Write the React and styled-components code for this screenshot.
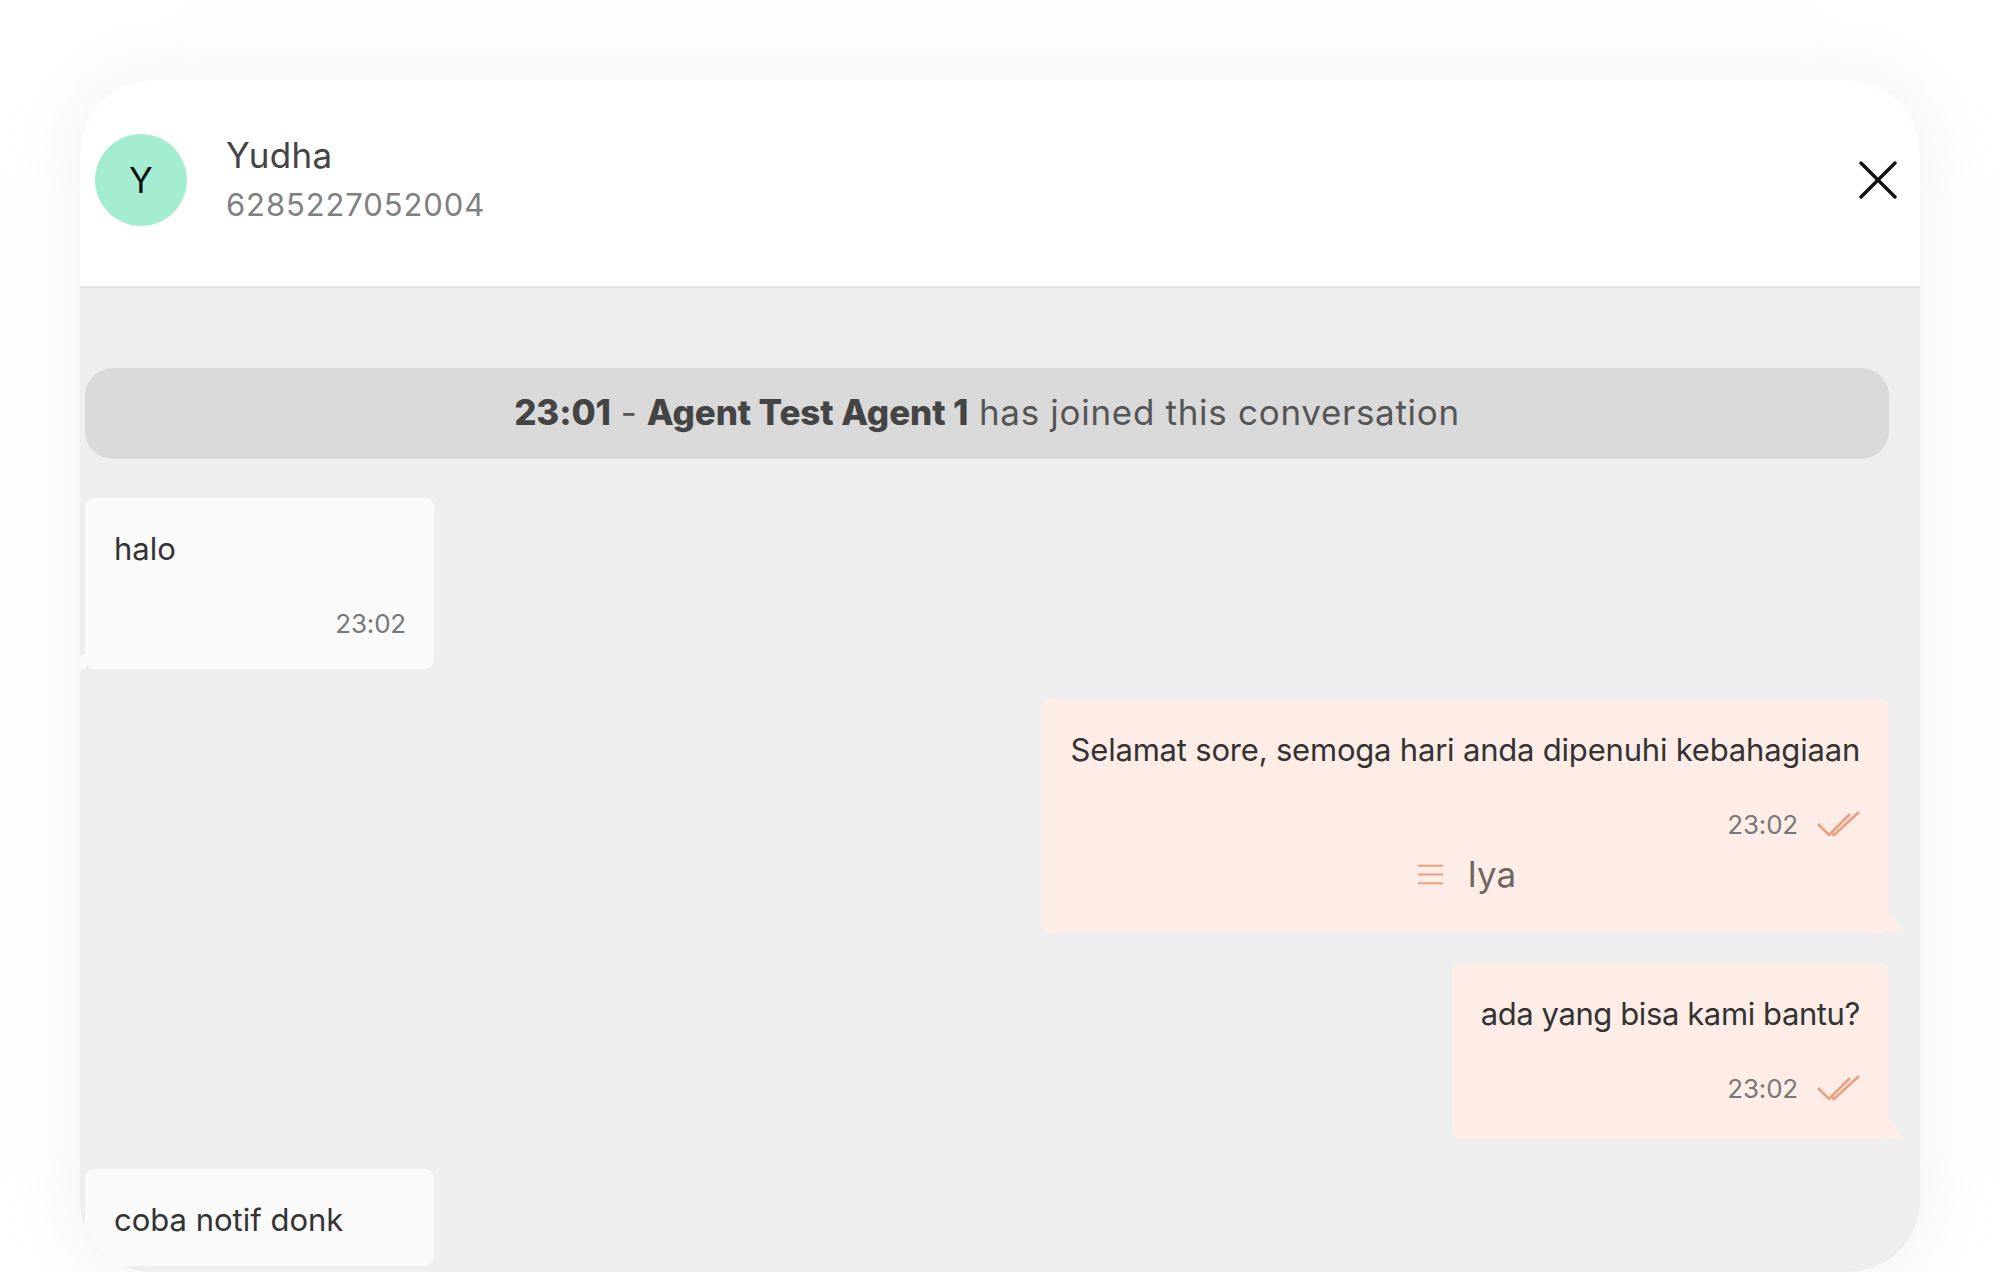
import React from 'react'
import styled, { createGlobalStyle } from 'styled-components'
import { HiOutlineMenu } from 'react-icons/hi'

const Global = createGlobalStyle`
  html, body {
    margin: 0;
    background: #fff;
  }
  body {
    height: 1272px;
    overflow: hidden;
    font-family: 'Inter', 'Liberation Sans', sans-serif;
  }
`

const Page = styled.div`
  height: 1272px;
  padding: 80px 79px 0 80px;
  box-sizing: border-box;
`

const Panel = styled.div`
  height: 100%;
  display: flex;
  flex-direction: column;
  background: #eeeeee;
  border-radius: 72px;
  overflow: hidden;
  box-shadow: 0 0 66px 12px rgba(226, 213, 217, 0.3);
`

const Header = styled.header`
  flex: none;
  height: 208px;
  box-sizing: border-box;
  padding: 0 23px 6px 15px;
  display: flex;
  align-items: center;
  background: #fff;
  border-bottom: 2px solid #e3e3e3;
`

const Avatar = styled.div`
  width: 92px;
  height: 92px;
  border-radius: 50%;
  background: #a5edd0;
  color: #111;
  font-size: 35px;
  display: grid;
  place-content: center;
`

const Contact = styled.div`
  margin-left: 39px;
  flex: 1;
`

const Name = styled.div`
  font-size: 35px;
  line-height: 49px;
  color: #444;
  letter-spacing: 0.3px;
`

const Phone = styled.div`
  font-size: 31px;
  line-height: 50px;
  color: #808080;
  letter-spacing: 0.9px;
`

const Close = styled.svg`
  width: 38px;
  height: 38px;
  stroke: #111;
  stroke-width: 3.4;
  fill: none;
  stroke-linecap: round;
`

const Thread = styled.div`
  flex: 1;
  min-height: 0;
  display: flex;
  flex-direction: column;
  padding: 80px 31px 0 5px;
`

const Notice = styled.div`
  flex: none;
  height: 91px;
  box-sizing: border-box;
  padding-bottom: 4px;
  display: grid;
  place-content: center;
  background: #d9d9d9;
  border-radius: 28px;
  font-size: 35px;
  color: #555;
  white-space: pre;
  b {
    font-weight: 800;
    color: #444;
    letter-spacing: -0.1px;
  }
`

const NoticeRest = styled.span`
  letter-spacing: 0.7px;
`

const Bubble = styled.div`
  flex: none;
  position: relative;
  box-sizing: border-box;
  align-self: ${(p) => (p.$out ? 'flex-end' : 'flex-start')};
  width: ${(p) => p.$width || 'auto'};
  height: ${(p) => p.$height};
  margin-top: ${(p) => p.$top};
  padding: 30px 29px 0;
  border-radius: 9px;
  background: ${(p) => (p.$out ? '#fdede6' : '#fafafa')};
  &::after {
    content: ${(p) => (p.$noTail ? 'none' : "''")};
    position: absolute;
    bottom: 0;
    ${(p) => (p.$out ? 'right: -15px;' : 'left: -5px;')}
    width: ${(p) => (p.$out ? '16px' : '6px')};
    height: ${(p) => (p.$out ? '22px' : '17px')};
    background: inherit;
    clip-path: ${(p) =>
      p.$out ? 'polygon(0 0, 100% 100%, 0 100%)' : 'polygon(100% 0, 100% 100%, 0 100%, 0 30%)'};
  }
`

const MessageText = styled.div`
  font-size: 31px;
  line-height: 42px;
  color: #333;
  white-space: nowrap;
  text-align: ${(p) => (p.$out ? 'right' : 'left')};
  letter-spacing: ${(p) => p.$track || '0'};
`

const Meta = styled.div`
  margin-top: 39px;
  margin-right: ${(p) => (p.$out ? '0' : '-1px')};
  display: flex;
  justify-content: flex-end;
  align-items: center;
  gap: 19px;
  height: 28px;
  font-size: 26px;
  letter-spacing: -0.2px;
  color: #787878;
`

const Ticks = styled.svg`
  width: 43px;
  height: 26px;
  fill: none;
  stroke: #ee9d7f;
  stroke-width: 2.6;
`

const QuickReply = styled.div`
  margin-top: 13px;
  padding-right: 1px;
  display: flex;
  justify-content: center;
  align-items: center;
  gap: 19px;
  font-size: 35px;
  line-height: 46px;
  color: #6e6763;
  svg {
    color: #ee9d7f;
    font-size: 35px;
    stroke-width: 1.4;
  }
`

const DoubleTick = () => (
  <Ticks viewBox="0 0 43 26">
    <path d="M1 13l11 11L33 3" />
    <path d="M14 21l3 3L42 1" />
  </Ticks>
)

export default function App() {
  return (
    <Page>
      <Global />
      <Panel>
        <Header>
          <Avatar>Y</Avatar>
          <Contact>
            <Name>Yudha</Name>
            <Phone>6285227052004</Phone>
          </Contact>
          <Close viewBox="0 0 38 38">
            <path d="M2 2l34 34M36 2L2 36" />
          </Close>
        </Header>
        <Thread>
          <Notice>
            <span>
              <b>23:01</b> - <b>Agent Test Agent 1</b>
              <NoticeRest> has joined this conversation</NoticeRest>
            </span>
          </Notice>
          <Bubble $width="349px" $height="171px" $top="39px">
            <MessageText>halo</MessageText>
            <Meta>23:02</Meta>
          </Bubble>
          <Bubble $out $height="234px" $top="30px">
            <MessageText $out $track="-0.2px">
              Selamat sore, semoga hari anda dipenuhi kebahagiaan
            </MessageText>
            <Meta $out>
              23:02
              <DoubleTick />
            </Meta>
            <QuickReply>
              <HiOutlineMenu />
              Iya
            </QuickReply>
          </Bubble>
          <Bubble $out $height="176px" $top="30px">
            <MessageText $out $track="-0.4px">
              ada yang bisa kami bantu?
            </MessageText>
            <Meta $out>
              23:02
              <DoubleTick />
            </Meta>
          </Bubble>
          <Bubble $noTail $width="349px" $height="97px" $top="30px">
            <MessageText>coba notif donk</MessageText>
          </Bubble>
        </Thread>
      </Panel>
    </Page>
  )
}
